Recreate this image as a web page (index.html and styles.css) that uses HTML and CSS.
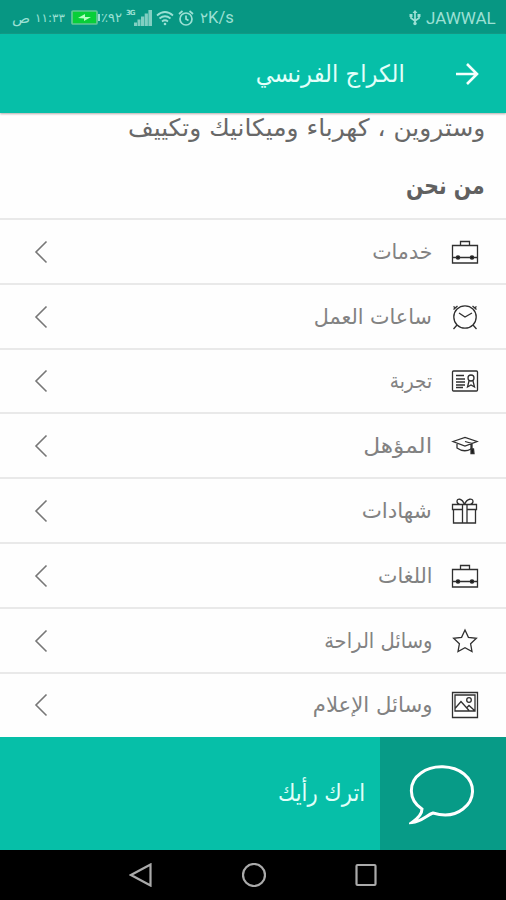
FILE: index.html
```html
<!DOCTYPE html>
<html lang="ar" dir="rtl">
<head>
<meta charset="utf-8">
<title>الكراج الفرنسي</title>
<link rel="stylesheet" href="styles.css">
</head>
<body>
<svg class="sprite" aria-hidden="true">
  <symbol id="case" viewBox="0 0 28 28"><path d="M1.500 7.500h25v17.500h-25zM1.500 19.500h25M9.500 7V3.500h9V7"/><circle class="dot" cx="7" cy="19.500" r="1.700"/><circle class="dot" cx="21" cy="19.500" r="1.700"/></symbol>
  <symbol id="chevron" viewBox="0 0 14 24"><path d="M12.500 1.500 2 12l10.500 10.500"/></symbol>
</svg>
<div class="status">
  <span class="ampm">ص</span><span class="time">١١:٣٣</span>
  <svg class="battery" viewBox="0 0 30 15"><rect class="cell" x="1" y="1" width="25" height="13" rx="1"/><path class="tip" d="M27 4h2v7h-2z"/><path class="bolt" d="m7 8 7-4v3h6l-7 4V8.500z"/></svg>
  <span class="percent">٪٩٢</span><span class="net">3G</span>
  <svg class="signal" viewBox="0 0 18 16"><path d="M0 12.500h3V16H0zM3.500 9.500h3V16h-3zM7 6.500h3.200V16H7zM10.700 3.500h3.200V16h-3.200zM14.400 0H18v16h-3.600z"/></svg>
  <svg class="wifi" viewBox="0 0 18 16"><path d="M1 5.500q8-7 16 0M3.500 8.500q5.500-4.500 11 0M6 11.500q3-2.500 6 0"/><circle cx="9" cy="14" r="1.300"/></svg>
  <svg class="alarm" viewBox="0 0 16 16"><circle cx="8" cy="9" r="6"/><path d="M8 5.500V9l2.500 1.500M1 4l3.500-3M15 4l-3.500-3"/></svg>
  <span class="speed"><span class="digit">٢</span>K/s</span>
  <svg class="usb" viewBox="0 0 12 16"><path d="M6 1v13M2 5v3l4 3 4-3V5"/><path class="solid" d="m6 0 2.500 3h-5zM.500 4h3v3h-3zM8.500 4h3v3h-3z"/><circle class="solid" cx="6" cy="13.500" r="1.700"/></svg>
  <span class="carrier">JAWWAL</span>
</div>
<header class="bar">
  <svg class="back" viewBox="0 0 24 24"><path d="M1 12h21M12 2l10 10-10 10"/></svg>
  <h1><span class="fit">الكراج الفرنسي</span></h1>
</header>
<main>
  <p class="intro"><span class="fit">وستروين ، كهرباء وميكانيك وتكييف</span></p>
  <h2><span class="fit">من نحن</span></h2>
  <ul class="menu">
    <li><svg class="icon"><use href="#case"/></svg><span class="label services">خدمات</span><svg class="chevron"><use href="#chevron"/></svg></li>
    <li><svg class="icon" viewBox="0 0 28 28"><circle cx="14" cy="14" r="11.200"/><path d="m8 10 6 4 7-4M2.500 6.500 6.500 3M2.500 3.500l2 1.500M25.500 6.500 21.500 3M25.500 3.500l-2 1.500M6 22l-3.500 4M22 22l3.500 4"/></svg><span class="label hours">ساعات العمل</span><svg class="chevron"><use href="#chevron"/></svg></li>
    <li><svg class="icon" viewBox="0 0 28 28"><rect x="1.500" y="4" width="25" height="20" rx="1"/><path d="M5 8.500h8M5 12h9M5 15h9M5 18h9M5 20.500h7"/><circle cx="20" cy="11" r="3"/><path d="m18 14-1.500 6 3.500-2 3.500 2-1.500-6"/></svg><span class="label experience">تجربة</span><svg class="chevron"><use href="#chevron"/></svg></li>
    <li><svg class="icon" viewBox="0 0 28 28"><path d="m2 9.500 12-4 12 4-12 4.500zM6 12v4q7 5 14 1v-4M14 9.500l7 2V18"/><path class="dot" d="M20 17h2.500l.5 4.500h-3z"/></svg><span class="label degree">المؤهل</span><svg class="chevron"><use href="#chevron"/></svg></li>
    <li><svg class="icon" viewBox="0 0 28 28"><path d="M1.500 7.500h10v5h-10zM16 7.500h9.500v5H16zM2.500 12.500h9V26h-9zM16 12.500h8.500V26H16zM11.500 7.500H16V26h-4.500zM13.500 7.500C11 1 6 1 6 4.500q0 2 3 3M13.500 7.500C16 1 22 1 22 4.500q0 2-3 3"/></svg><span class="label certificates">شهادات</span><svg class="chevron"><use href="#chevron"/></svg></li>
    <li><svg class="icon"><use href="#case"/></svg><span class="label languages">اللغات</span><svg class="chevron"><use href="#chevron"/></svg></li>
    <li><svg class="icon" viewBox="0 0 28 28"><path d="m14 3 3.400 7.300 8 1-5.800 5.500 1.400 7.700-7-3.700-7 3.700 1.400-7.700-5.800-5.500 8-1z"/></svg><span class="label comfort">وسائل الراحة</span><svg class="chevron"><use href="#chevron"/></svg></li>
    <li><svg class="icon" viewBox="0 0 28 28"><path d="M1.500 1.500h25v25h-25zM4 4h20v16H4zM4 17.500l6-7 8 9M15.500 17l2.500-2.500 5.500 5"/><circle cx="18" cy="9" r="2.300"/></svg><span class="label media">وسائل الإعلام</span><svg class="chevron"><use href="#chevron"/></svg></li>
  </ul>
</main>
<footer class="feedback">
  <div class="bubble"><svg viewBox="0 0 66 60"><path d="M13 44C-1 35-1 17 12 8c12-9 32-8 43 1 12 10 11 26-1 35-9 7-20 7-30 4C18 50 12 57 3 57.500 8 54 13 50 13 44z"/></svg></div>
  <div class="prompt"><span class="fit">اترك رأيك</span></div>
</footer>
<nav class="system">
  <svg viewBox="0 0 24 24"><path d="M21.500 1.500v21L2 12z"/></svg>
  <svg viewBox="0 0 24 24"><circle cx="12" cy="12" r="11"/></svg>
  <svg viewBox="0 0 24 24"><rect x="2.500" y="2" width="19" height="20" rx="1"/></svg>
</nav>
</body>
</html>
```
FILE: styles.css
```css
* { box-sizing: border-box; }
body { margin: 0; width: 506px; height: 900px; overflow: hidden; background: #fefefe; font-family: "DejaVu Sans", sans-serif; display: flex; flex-direction: column; }
svg { fill: none; flex: none; display: block; }
.sprite { width: 0; height: 0; position: absolute; }
.status { direction: ltr; flex: none; height: 34px; background: #079783; color: #9ce0d4; display: flex; align-items: center; padding: 1px 10px 0 12px; font-size: 14px; white-space: nowrap; }
.status svg { stroke: #9ce0d4; stroke-width: 1.7; }
.ampm { width: 23px; font-size: 15px; }
.time { width: 36px; font-size: 12px; }
.battery { width: 30px; height: 15px; }
.battery .cell { fill: #08cf38; stroke: #62c895; }
.battery .tip { fill: #9ce0d4; stroke: none; }
.battery .bolt { fill: #b4ffc1; stroke: none; }
.percent { width: 25px; font-size: 13px; direction: ltr; unicode-bidi: bidi-override; }
.net { width: 8px; font-size: 7px; font-weight: 700; letter-spacing: -1px; padding-bottom: 9px; }
.status .signal { width: 18px; height: 16px; fill: #82cfc2; stroke: none; }
.wifi { width: 18px; height: 16px; margin-left: 4px; }
.wifi circle { fill: #9ce0d4; stroke: none; }
.alarm { width: 16px; height: 16px; margin: 0 6px 0 4px; }
.speed { font: 16.5px Roboto, sans-serif; }
.digit { font: 15px "DejaVu Sans", sans-serif; }
.usb { width: 12px; height: 16px; margin-left: auto; }
.usb .solid { fill: #9ce0d4; stroke: none; }
.carrier { width: 70px; margin-left: 5px; font: 17px Roboto, sans-serif; }
.bar { flex: none; height: 79px; background: #06bfa8; color: #e2fffa; display: flex; align-items: center; padding: 0 27px; box-shadow: 0 1px 2px #b5aaaa; z-index: 1; }
.back { width: 24px; height: 24px; stroke: #f4fffd; stroke-width: 2.6; }
.bar h1 { margin: 0 50px 0 0; font-size: 24px; font-weight: 400; line-height: 40px; }
.fit, .label { display: inline-block; white-space: nowrap; transform-origin: right center; }
.bar .fit { transform: scaleX(.945); }
main { height: 624px; flex: none; color: #686868; }
.intro { margin: 0; height: 40px; padding: 0 21px; font-size: 24px; line-height: 31px; }
.intro .fit { transform: scaleX(1.035); }
h2 { margin: 0; height: 65px; padding: 0 21px; font-size: 24px; line-height: 66px; color: #606060; }
h2 .fit { transform: scaleX(.85); }
.menu { list-style: none; margin: 0; padding: 0; }
.menu li { height: 64.8px; border-top: 2px solid #e9e9e9; display: flex; align-items: center; padding: 1px 27px 0 34px; }
.icon { width: 28px; height: 28px; stroke: #303030; stroke-width: 1.3; }
.dot { fill: #181818; }
.label { margin-right: 19px; font-size: 21px; line-height: 36px; color: #828282; }
.services, .languages { transform: scaleX(.98); }
.hours { transform: scaleX(.985); }
.experience { transform: scaleX(.88); }
.degree { transform: scaleX(1.11); }
.certificates { transform: scaleX(1.02); }
.comfort { transform: scaleX(.93); }
.media { transform: scaleX(1.01); }
.chevron { width: 14px; height: 24px; margin-right: auto; stroke: #777; stroke-width: 1.6; }
.feedback { height: 113px; flex: none; background: #06bfa8; color: #e2fffa; display: flex; }
.bubble { width: 126px; background: #079b87; display: flex; align-items: center; justify-content: center; padding: 3px 3px 0 0; }
.bubble svg { width: 66px; height: 60px; stroke: #fff; stroke-width: 3; }
.prompt { padding-right: 15px; font-size: 24px; line-height: 113px; }
.prompt .fit { transform: scaleX(.88); }
.system { direction: ltr; height: 50px; flex: none; background: #000; display: flex; justify-content: center; align-items: center; gap: 88.5px; padding-left: 1px; }
.system svg { width: 24px; height: 24px; stroke: #aaa; stroke-width: 2.2; }
```
